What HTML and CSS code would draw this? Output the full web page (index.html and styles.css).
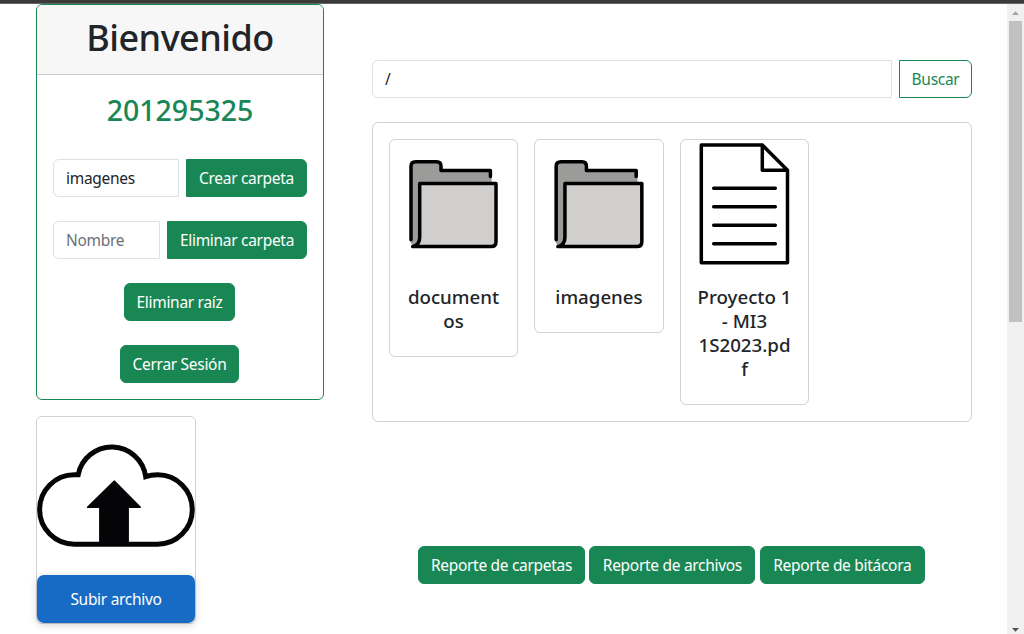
FILE: index.html
```html
<!DOCTYPE html>
<html lang="es">
<head>
<meta charset="utf-8">
<title>Archivos</title>
<link rel="stylesheet" href="styles.css">
</head>
<body>
<div class="topbar"></div>
<div class="window">
  <main class="page">
    <aside class="sidebar">
      <section class="card user-card">
        <header class="user-header"><h1>Bienvenido</h1></header>
        <div class="user-body">
          <h2>201295325</h2>
          <div class="group"><input class="field" type="text" value="imagenes"><button class="btn create">Crear carpeta</button></div>
          <div class="group"><input class="field" type="text" placeholder="Nombre"><button class="btn remove">Eliminar carpeta</button></div>
          <button class="btn root">Eliminar raíz</button>
          <button class="btn logout">Cerrar Sesión</button>
        </div>
      </section>
      <section class="card upload-card">
        <svg class="cloud" viewBox="37 417 158 158">
          <path d="M74.3 544.2A34.7 34.7 0 0 1 74.3 474.8H78.2A34.2 34.2 0 0 1 145.7 476.7Q151 474.8 157.6 474.8A34.7 34.7 0 0 1 157.6 544.2Z" fill="none" stroke="#050407" stroke-width="5"/>
          <path d="M114.3 481L87.5 507.2H99.8V544H128.2V507.2H140.3Z" fill="#050407" stroke="#050407" stroke-width="1.4" stroke-linejoin="round"/>
        </svg>
        <button class="upload-btn">Subir archivo</button>
      </section>
    </aside>
    <section class="content">
      <div class="group search"><input class="field" type="text" value="/"><button class="btn outline">Buscar</button></div>
      <div class="card files">
        <article class="card file">
          <svg class="picture" viewBox="390.3 139.7 127 129">
            <path d="M411.3 239V166Q411.3 161.5 416 161.5H437Q441.3 161.5 441.3 166V170.3H492V184H420V239Q420 244 413 246L410.5 241Z" fill="#9b9b9a"/>
            <path d="M420 183.3H496.3V241.5Q496.3 246.3 491.5 246.3H413Q420 244 420 238Z" fill="#d0cfce"/>
            <path d="M411.3 239.5V166Q411.3 161.5 416 161.5H437Q441.3 161.5 441.3 166V170.3H490.7V176.3M413 246.3Q420 245 420 237V183.3H496.3V241.5Q496.3 246.3 491.5 246.3H413" class="line"/>
          </svg>
          <h5>documentos</h5>
        </article>
        <article class="card file wide">
          <svg class="picture" viewBox="390.3 139.7 127 129" preserveAspectRatio="none">
            <path d="M411.3 239V166Q411.3 161.5 416 161.5H437Q441.3 161.5 441.3 166V170.3H492V184H420V239Q420 244 413 246L410.5 241Z" fill="#9b9b9a"/>
            <path d="M420 183.3H496.3V241.5Q496.3 246.3 491.5 246.3H413Q420 244 420 238Z" fill="#d0cfce"/>
            <path d="M411.3 239.5V166Q411.3 161.5 416 161.5H437Q441.3 161.5 441.3 166V170.3H490.7V176.3M413 246.3Q420 245 420 237V183.3H496.3V241.5Q496.3 246.3 491.5 246.3H413" class="line"/>
          </svg>
          <h5>imagenes</h5>
        </article>
        <article class="card file">
          <svg class="picture" viewBox="681 140 127 129">
            <path d="M762.3 145H701.3V262.7H787.5V170.3L762.3 145V170.3H787.3M713.7 188.3H775.3M713.7 206.8H775.3M713.7 225.3H775.3M713.7 243.7H775.3" class="line"/>
          </svg>
          <h5>Proyecto 1 - MI3 1S2023.pdf</h5>
        </article>
      </div>
      <div class="reports">
        <button class="btn r1">Reporte de carpetas</button>
        <button class="btn r2">Reporte de archivos</button>
        <button class="btn r3">Reporte de bitácora</button>
      </div>
    </section>
  </main>
  <div class="scrollbar">
    <svg class="arrow" viewBox="0 0 17 17"><path d="M5 11L8.5 7.2L12 11Z" fill="#a3a3a3"/></svg>
    <div class="thumb"></div>
    <svg class="arrow" viewBox="0 0 17 17"><path d="M5 11L8.5 14.8L12 11Z" fill="#505050"/></svg>
  </div>
</div>
</body>
</html>
```
FILE: styles.css
```css
* { box-sizing: border-box; }
body { margin: 0; height: 634px; overflow: hidden; background: #fff; color: #212529; font: 15.5px/24px "Noto Sans", "Open Sans", sans-serif; letter-spacing: -.3px; }
h1, h2, h5 { margin: 0; font-weight: 500; }
svg { display: block; }
.topbar { height: 4px; background: #3b3939; border-bottom: 1px solid #666; }
.window { display: flex; height: 630px; }
.page { flex: 1; display: flex; padding-left: 36px; gap: 48px; }
.sidebar { width: 288px; display: flex; flex-direction: column; gap: 16px; }
.card { border: 1px solid #d0d1d1; border-radius: 6px; background: #fff; }
.user-card { height: 396px; border-color: #198754; overflow: hidden; }
.user-header { height: 70px; background: #f7f7f7; border-bottom: 1px solid #c8c9ca; text-align: center; }
h1 { font-size: 36px; line-height: 65px; letter-spacing: -.5px; }
.user-body { padding: 16px; display: flex; flex-direction: column; align-items: center; gap: 24px; }
h2 { color: #198754; font-size: 28.5px; line-height: 38px; height: 44px; letter-spacing: 0; }
.group { display: flex; width: 100%; gap: 7px; }
.field { flex: 1; min-width: 0; height: 38px; padding: 6px 12px; border: 1px solid #dee2e6; border-radius: 6px 0 0 6px; background: #fff; color: #212529; font: inherit; letter-spacing: inherit; outline: 0; }
.field::placeholder { color: #6b7075; opacity: 1; }
.btn { height: 38px; padding: 0; border: 1px solid #198754; border-radius: 6px; background: #198754; color: #fff; font: inherit; letter-spacing: inherit; white-space: nowrap; }
.group .btn { border-radius: 0 6px 6px 0; }
.create { width: 121px; }
.remove { width: 140px; }
.root { width: 111px; margin-right: 1px; }
.logout { width: 119px; margin-right: 1px; }
.upload-card { width: 160px; height: 208px; }
.cloud { width: 158px; height: 158px; }
.upload-btn { display: block; width: 158px; height: 48px; padding: 0; border: 0; border-radius: 7px; background: #186bc5; color: #fff; font: inherit; letter-spacing: inherit; box-shadow: 0 2px 9px rgba(0, 0, 0, .18); }
.content { width: 600px; padding-top: 56px; }
.btn.outline { width: 73px; background: #fff; color: #198754; }
.files { height: 300px; margin-top: 24px; padding: 16px; display: flex; align-items: flex-start; gap: 16px; }
.file { width: 129px; padding-bottom: 23px; text-align: center; }
.wide { width: 130px; }
.picture { width: 100%; height: 129px; }
.line { fill: none; stroke: #000; stroke-width: 3.5; stroke-linecap: round; stroke-linejoin: round; }
h5 { margin: 16px 16px 0; font-size: 18.7px; line-height: 24px; letter-spacing: 0; overflow-wrap: anywhere; }
.reports { display: flex; gap: 4.4px; margin: 124px 0 0 46px; }
.r1 { width: 167px; }
.r2 { width: 166px; }
.r3 { width: 165px; }
.scrollbar { width: 17px; padding: 0 2px; background: #f0f0f0; display: flex; flex-direction: column; }
.arrow { width: 17px; height: 17px; margin-left: -2px; flex: none; }
.thumb { height: 301px; background: #c1c1c1; margin-bottom: auto; }
```
